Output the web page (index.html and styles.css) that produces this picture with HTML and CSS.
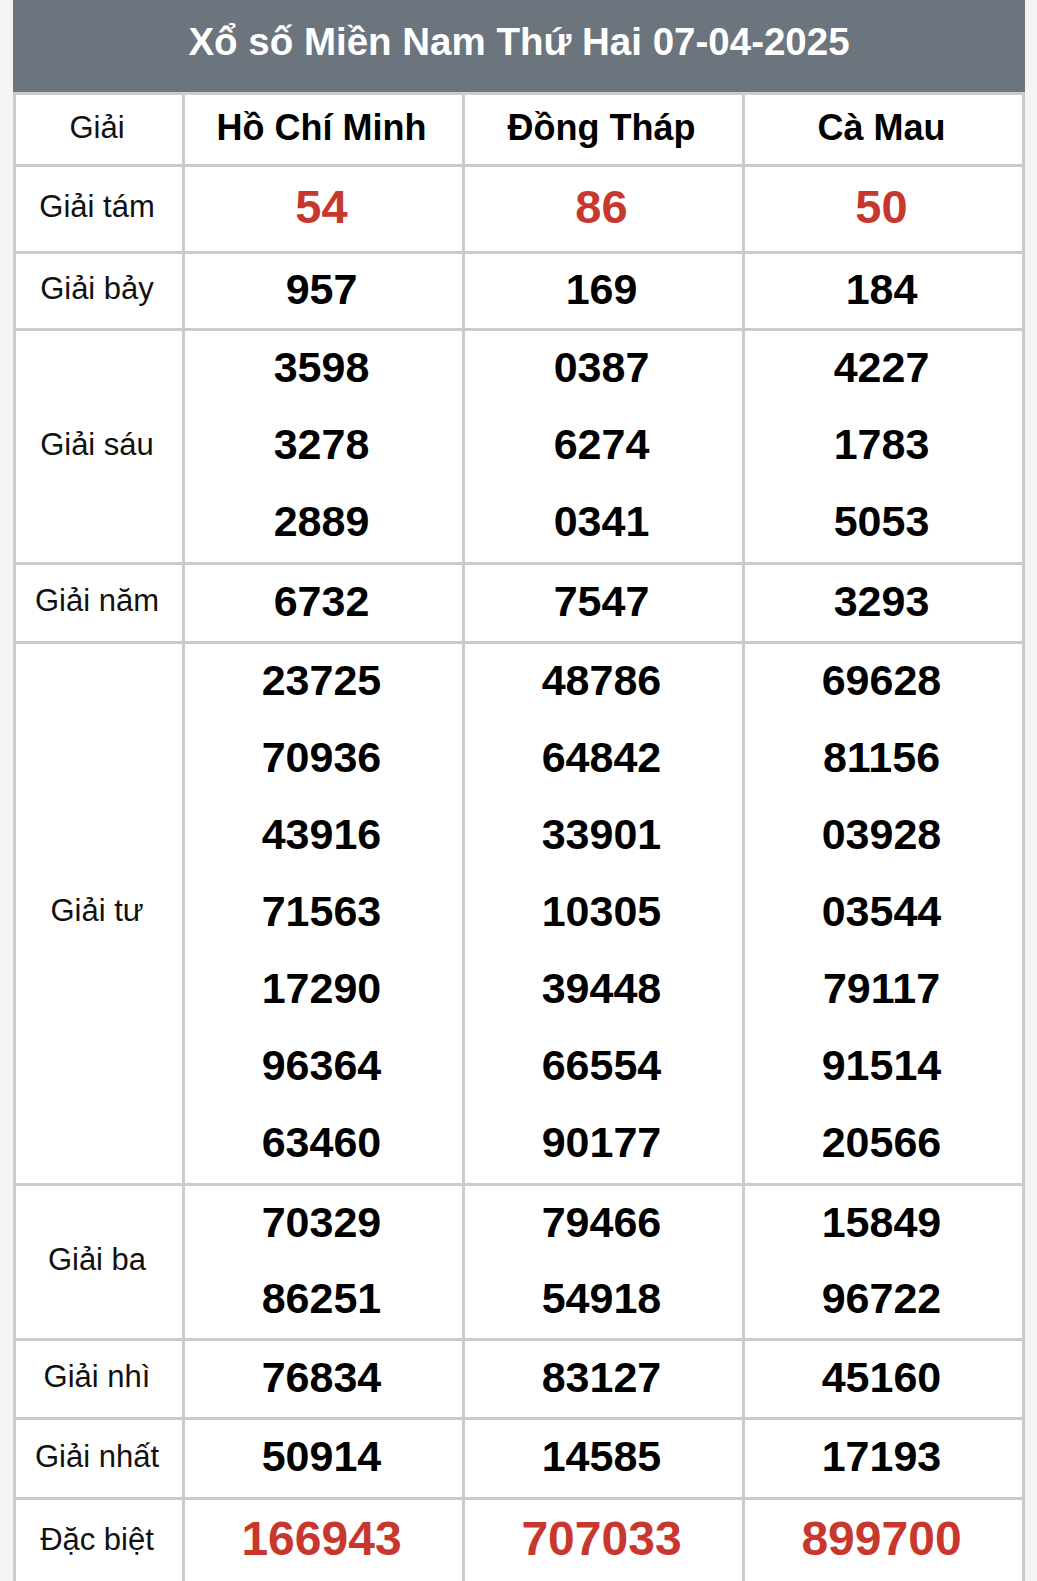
FILE: index.html
```html
<!DOCTYPE html>
<html lang="vi">
<head>
<meta charset="utf-8">
<title>Xổ số Miền Nam Thứ Hai 07-04-2025</title>
<link rel="stylesheet" href="styles.css">
</head>
<body>
<div class="wrap">
  <div class="title">Xổ số Miền Nam Thứ Hai 07-04-2025</div>
  <table class="kq">
    <colgroup>
      <col class="c-label"><col class="c-prov"><col class="c-prov"><col class="c-prov">
    </colgroup>
    <tr class="r-head">
      <td class="lbl">Giải</td>
      <td class="prov">Hồ Chí Minh</td>
      <td class="prov">Đồng Tháp</td>
      <td class="prov">Cà Mau</td>
    </tr>
    <tr class="r-tam">
      <td class="lbl">Giải tám</td>
      <td class="num red big"><div>54</div></td>
      <td class="num red big"><div>86</div></td>
      <td class="num red big"><div>50</div></td>
    </tr>
    <tr class="r-bay">
      <td class="lbl">Giải bảy</td>
      <td class="num"><div>957</div></td>
      <td class="num"><div>169</div></td>
      <td class="num"><div>184</div></td>
    </tr>
    <tr class="r-sau">
      <td class="lbl">Giải sáu</td>
      <td class="num"><div>3598</div><div>3278</div><div>2889</div></td>
      <td class="num"><div>0387</div><div>6274</div><div>0341</div></td>
      <td class="num"><div>4227</div><div>1783</div><div>5053</div></td>
    </tr>
    <tr class="r-nam">
      <td class="lbl">Giải năm</td>
      <td class="num"><div>6732</div></td>
      <td class="num"><div>7547</div></td>
      <td class="num"><div>3293</div></td>
    </tr>
    <tr class="r-tu">
      <td class="lbl lbl-up">Giải tư</td>
      <td class="num"><div>23725</div><div>70936</div><div>43916</div><div>71563</div><div>17290</div><div>96364</div><div>63460</div></td>
      <td class="num"><div>48786</div><div>64842</div><div>33901</div><div>10305</div><div>39448</div><div>66554</div><div>90177</div></td>
      <td class="num"><div>69628</div><div>81156</div><div>03928</div><div>03544</div><div>79117</div><div>91514</div><div>20566</div></td>
    </tr>
    <tr class="r-ba">
      <td class="lbl">Giải ba</td>
      <td class="num"><div>70329</div><div>86251</div></td>
      <td class="num"><div>79466</div><div>54918</div></td>
      <td class="num"><div>15849</div><div>96722</div></td>
    </tr>
    <tr class="r-nhi">
      <td class="lbl">Giải nhì</td>
      <td class="num"><div>76834</div></td>
      <td class="num"><div>83127</div></td>
      <td class="num"><div>45160</div></td>
    </tr>
    <tr class="r-nhat">
      <td class="lbl">Giải nhất</td>
      <td class="num"><div>50914</div></td>
      <td class="num"><div>14585</div></td>
      <td class="num"><div>17193</div></td>
    </tr>
    <tr class="r-db">
      <td class="lbl">Đặc biệt</td>
      <td class="num red big db"><div>166943</div></td>
      <td class="num red big db"><div>707033</div></td>
      <td class="num red big db"><div>899700</div></td>
    </tr>
  </table>
</div>
</body>
</html>
```

FILE: styles.css
```css
html, body {
  margin: 0;
  padding: 0;
  background: #f4f4f4;
}
body {
  font-family: "Liberation Sans", Arial, sans-serif;
  color: #111;
}
.wrap {
  width: 1012px;
  margin-left: 13px;
}
.title {
  height: 92px;
  line-height: 84px;
  background: #6c757d;
  color: #fff;
  font-weight: bold;
  font-size: 38.5px;
  text-align: center;
}
.kq {
  width: 1012px;
  border-collapse: collapse;
  table-layout: fixed;
  background: #fff;
}
.c-label { width: 169px; }
.c-prov { width: 280px; }
.kq td {
  border: 3px solid #cccccc;
  padding: 0 4px 4px 0;
  text-align: center;
  vertical-align: middle;
}
.lbl {
  font-size: 31px;
  color: #111;
}
.kq td.lbl-up {
  padding-bottom: 6px;
}
.prov {
  font-size: 36px;
  font-weight: bold;
  color: #000;
}
.r-head td {
  line-height: 65px;
}
.kq td.num {
  padding-bottom: 0;
}
.num {
  font-weight: bold;
  font-size: 43px;
  color: #000;
}
.num div {
  height: 73px;
  line-height: 73px;
  padding-bottom: 4px;
}
.red { color: #c8372d; }
.big { font-size: 47px; }
.db { font-size: 48px; }
.r-tam .num div { height: 80px; line-height: 80px; }
.r-bay .num div { height: 70px; line-height: 70px; }
.r-nam .num div { height: 72px; line-height: 72px; }
.r-ba .num div { height: 72px; line-height: 72px; }
.r-nhi .num div { height: 72px; line-height: 72px; }
.r-nhat .num div { height: 73px; line-height: 73px; }
.r-db .num div { height: 78px; line-height: 78px; padding-bottom: 6px; }
```
